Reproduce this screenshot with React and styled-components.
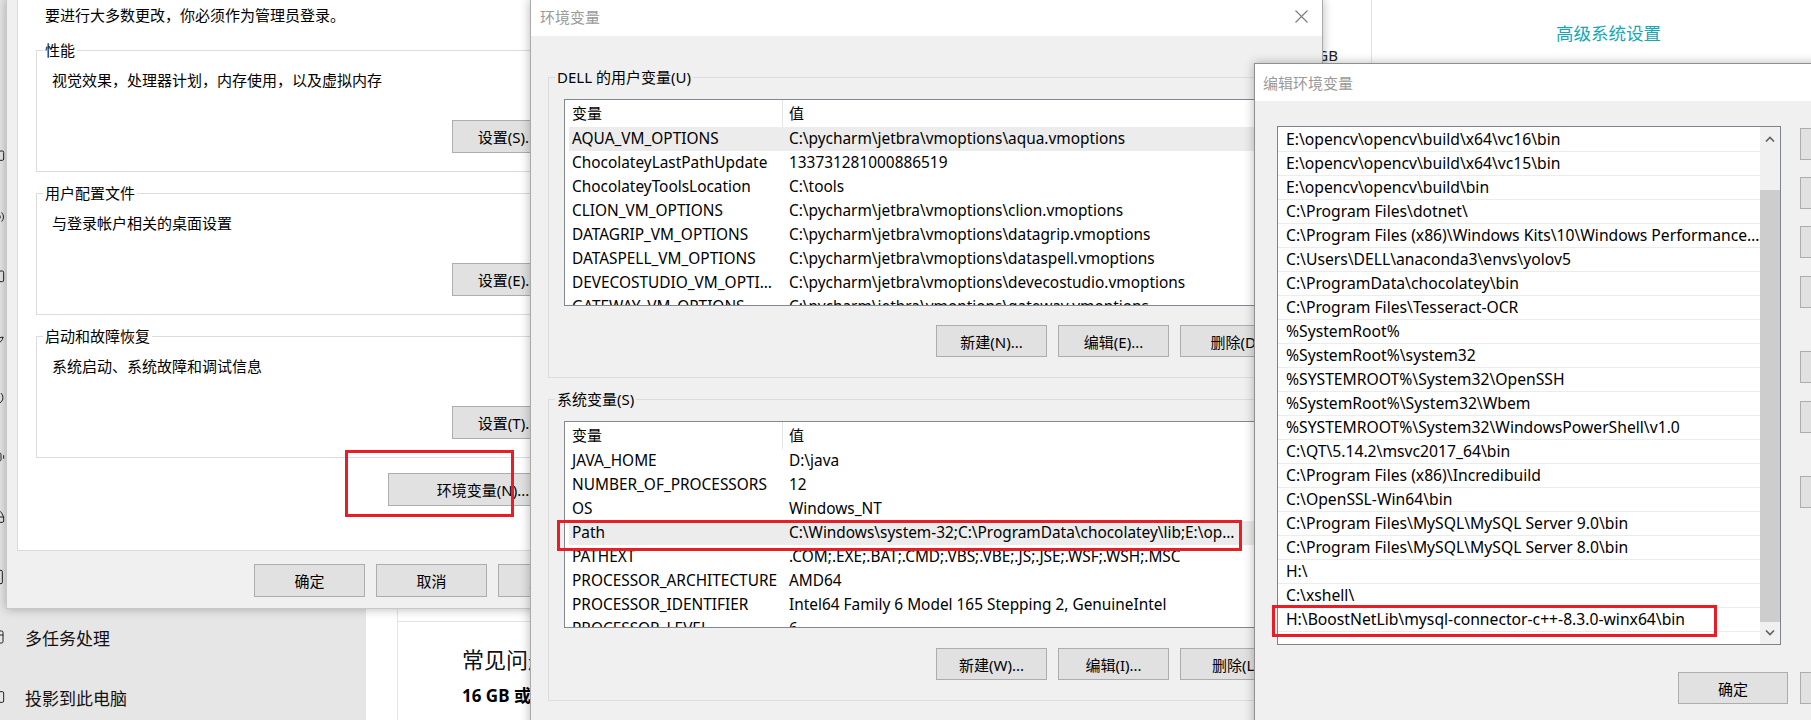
import styled, { createGlobalStyle } from 'styled-components';
import {
  Monitor,
  Volume2,
  MessageSquare,
  Moon,
  Power,
  BatteryMedium,
  HardDrive,
  Tablet,
  PanelsTopLeft,
  Cast,
} from 'lucide-react';

const GlobalStyle = createGlobalStyle`
  body {
    margin: 0;
    font-family: 'Noto Sans', 'Noto Sans CJK SC', sans-serif;
    font-size: 15px;
    color: #000;
  }
`;

const Desktop = styled.div`
  position: relative;
  width: 1811px;
  height: 720px;
  overflow: hidden;
  background: #fff;
`;

/* settings window behind the dialogs */
const SettingsWindow = styled.div`
  position: absolute;
  inset: 0;
  display: grid;
  grid-template-columns: 366px 31px 975px 1fr;
`;

const Nav = styled.nav`
  background: #e6e6e6;
  padding-top: 127px;
  overflow: hidden;
`;

const NavItem = styled.div`
  display: flex;
  align-items: center;
  gap: 20px;
  height: 60px;
  font-size: 17px;
  color: #111;

  svg {
    margin-left: -11px;
    flex: none;
  }
`;

const Gutter = styled.div`
  background: #fff;
`;

const MainColumn = styled.div`
  display: flex;
  flex-direction: column;
  border-left: 1px solid #e4e4e4;
  border-right: 1px solid #e4e4e4;
  padding-top: 43px;
`;

const SpecRow = styled.div`
  display: flex;
  justify-content: flex-end;
  padding-right: 33px;
  line-height: 24px;
  font-size: 15px;
  color: #222;
`;

const Divider = styled.div`
  margin-top: auto;
  border-top: 1px solid #e4e4e4;
`;

const FaqTitle = styled.div`
  margin-top: 22px;
  padding-left: 64px;
  font-size: 22px;
  line-height: 30px;
  color: #111;
`;

const FaqItem = styled.div`
  margin: 10px 0 12px;
  padding-left: 64px;
  font-size: 17px;
  font-weight: 700;
  line-height: 24px;
`;

const SideColumn = styled.div`
  padding: 21px 0 0 184px;
`;

const SideLink = styled.div`
  font-size: 17.5px;
  line-height: 24px;
  color: #16a6b6;
`;

/* generic dialog parts */
const Window = styled.div`
  position: absolute;
  left: ${(p) => p.$x}px;
  top: ${(p) => p.$y}px;
  width: ${(p) => p.$w}px;
  height: ${(p) => p.$h}px;
  background: #f0f0f0;
  border: 1px solid ${(p) => p.$border || '#aaaaaa'};
  box-shadow: 0 0 10px rgba(0, 0, 0, 0.28);
  box-sizing: border-box;
`;

const TitleBar = styled.div`
  display: flex;
  align-items: center;
  justify-content: space-between;
  height: ${(p) => p.$h}px;
  padding: 0 14px ${(p) => p.$pb || 0}px ${(p) => p.$pad}px;
  box-sizing: border-box;
  background: #fff;
  color: #9a9a9a;
  font-size: 15px;
`;

const WinButton = styled.button`
  display: flex;
  align-items: center;
  justify-content: center;
  flex: none;
  width: ${(p) => p.$w || 111}px;
  height: ${(p) => p.$h || 32}px;
  margin-top: ${(p) => p.$top || 0}px;
  padding: 0;
  background: #e1e1e1;
  border: 1px solid #adadad;
  font-family: inherit;
  font-size: 15px;
  color: #000;
  white-space: nowrap;
`;

const GroupBox = styled.fieldset`
  margin: ${(p) => p.$top || 0}px 0 0;
  padding: 0 ${(p) => p.$pr}px ${(p) => p.$pb}px 15px;
  border: 1px solid #dcdcdc;
  min-width: 0;
`;

const GroupTitle = styled.legend`
  margin-left: -9px;
  padding: 0 2px;
  font-size: 15px;
  line-height: 20px;
`;

const ButtonRow = styled.div`
  display: flex;
  justify-content: flex-end;
  gap: ${(p) => p.$gap || 11}px;
  margin-top: ${(p) => p.$top || 0}px;
  padding-right: ${(p) => p.$pr || 0}px;
`;

const Annotation = styled.div`
  position: absolute;
  left: ${(p) => p.$x}px;
  top: ${(p) => p.$y}px;
  width: ${(p) => p.$w}px;
  height: ${(p) => p.$h}px;
  border: 3px solid #e81d25;
  box-sizing: border-box;
  pointer-events: none;
`;

/* system properties dialog */
const PropsPanel = styled.div`
  display: flex;
  flex-direction: column;
  height: 551px;
  margin: 0 10px;
  padding: 5px 30px 0 18px;
  background: #fff;
  border: 1px solid #d9d9d9;
  border-top: none;
  box-sizing: border-box;
`;

const Note = styled.div`
  padding-left: 9px;
  margin-bottom: 15px;
  line-height: 20px;
`;

const GroupText = styled.div`
  margin-top: 10px;
  line-height: 20px;
`;

/* environment variables dialog */
const DialogBody = styled.div`
  padding: 0 17px;
`;

const ListBox = styled.div`
  height: 207px;
  margin-top: 12px;
  background: #fff;
  border: 1px solid #828790;
  box-sizing: border-box;
  overflow: hidden;
`;

const ListHeader = styled.div`
  display: flex;
  height: 27px;
  line-height: 27px;
`;

const HeaderCell = styled.div`
  width: ${(p) => p.$w}px;
  padding-left: ${(p) => p.$pl}px;
  box-sizing: border-box;
  border-right: ${(p) => (p.$sep ? '1px solid #e5e5e5' : 'none')};
`;

const ListRow = styled.div`
  display: flex;
  height: 24px;
  margin-left: 4px;
  line-height: 24px;
  font-size: 15.4px;
  background: ${(p) => (p.$selected ? '#ececec' : 'transparent')};
`;

const Cell = styled.div`
  width: ${(p) => p.$w}px;
  padding: 0 ${(p) => p.$pr}px 0 ${(p) => p.$pl}px;
  box-sizing: border-box;
  white-space: nowrap;
  overflow: hidden;
  text-overflow: ellipsis;
`;

/* edit dialog */
const EditBody = styled.div`
  display: flex;
  flex-direction: column;
  padding: 25px 0 0 22px;
`;

const EditMain = styled.div`
  display: flex;
  gap: 19px;
`;

const PathList = styled.div`
  display: flex;
  width: 504px;
  height: 519px;
  background: #fff;
  border: 1px solid #7f848c;
  box-sizing: border-box;
`;

const PathRows = styled.div`
  flex: 1;
  min-width: 0;
  padding-top: 1px;
  overflow: hidden;
`;

const PathRow = styled.div`
  height: 24px;
  padding-left: 8px;
  border-bottom: 1px solid #ececec;
  box-sizing: border-box;
  font-size: 15.7px;
  line-height: 23px;
  white-space: nowrap;
  overflow: hidden;
  text-overflow: ellipsis;
`;

const ScrollBar = styled.div`
  display: flex;
  flex-direction: column;
  width: 20px;
  background: #f0f0f0;
`;

const ScrollArrow = styled.div`
  display: flex;
  align-items: center;
  justify-content: center;
  height: ${(p) => p.$h}px;
`;

const ScrollThumb = styled.div`
  flex: 1;
  margin-top: 40px;
  background: #cdcdcd;
`;

const SideButtons = styled.div`
  display: flex;
  flex-direction: column;
`;

const navItems = [
  { icon: Monitor, text: '显示' },
  { icon: Volume2, text: '声音' },
  { icon: MessageSquare, text: '通知和操作' },
  { icon: Moon, text: '专注助手' },
  { icon: Power, text: '电源和睡眠' },
  { icon: BatteryMedium, text: '电池' },
  { icon: HardDrive, text: '存储' },
  { icon: Tablet, text: '平板电脑' },
  { icon: PanelsTopLeft, text: '多任务处理' },
  { icon: Cast, text: '投影到此电脑' },
];

const propGroups = [
  { title: '性能', text: '视觉效果，处理器计划，内存使用，以及虚拟内存', button: '设置(S)...' },
  { title: '用户配置文件', text: '与登录帐户相关的桌面设置', button: '设置(E)...' },
  { title: '启动和故障恢复', text: '系统启动、系统故障和调试信息', button: '设置(T)...' },
];

const userVars = [
  ['AQUA_VM_OPTIONS', 'C:\\pycharm\\jetbra\\vmoptions\\aqua.vmoptions', true],
  ['ChocolateyLastPathUpdate', '133731281000886519'],
  ['ChocolateyToolsLocation', 'C:\\tools'],
  ['CLION_VM_OPTIONS', 'C:\\pycharm\\jetbra\\vmoptions\\clion.vmoptions'],
  ['DATAGRIP_VM_OPTIONS', 'C:\\pycharm\\jetbra\\vmoptions\\datagrip.vmoptions'],
  ['DATASPELL_VM_OPTIONS', 'C:\\pycharm\\jetbra\\vmoptions\\dataspell.vmoptions'],
  ['DEVECOSTUDIO_VM_OPTIONS', 'C:\\pycharm\\jetbra\\vmoptions\\devecostudio.vmoptions'],
  ['GATEWAY_VM_OPTIONS', 'C:\\pycharm\\jetbra\\vmoptions\\gateway.vmoptions'],
];

const systemVars = [
  ['JAVA_HOME', 'D:\\java'],
  ['NUMBER_OF_PROCESSORS', '12'],
  ['OS', 'Windows_NT'],
  ['Path', 'C:\\Windows\\system-32;C:\\ProgramData\\chocolatey\\lib;E:\\opencv\\opencv\\build\\x64\\vc16\\bin', true],
  ['PATHEXT', '.COM;.EXE;.BAT;.CMD;.VBS;.VBE;.JS;.JSE;.WSF;.WSH;.MSC'],
  ['PROCESSOR_ARCHITECTURE', 'AMD64'],
  ['PROCESSOR_IDENTIFIER', 'Intel64 Family 6 Model 165 Stepping 2, GenuineIntel'],
  ['PROCESSOR_LEVEL', '6'],
];

const paths = [
  'E:\\opencv\\opencv\\build\\x64\\vc16\\bin',
  'E:\\opencv\\opencv\\build\\x64\\vc15\\bin',
  'E:\\opencv\\opencv\\build\\bin',
  'C:\\Program Files\\dotnet\\',
  'C:\\Program Files (x86)\\Windows Kits\\10\\Windows Performance Toolkit\\',
  'C:\\Users\\DELL\\anaconda3\\envs\\yolov5',
  'C:\\ProgramData\\chocolatey\\bin',
  'C:\\Program Files\\Tesseract-OCR',
  '%SystemRoot%',
  '%SystemRoot%\\system32',
  '%SYSTEMROOT%\\System32\\OpenSSH',
  '%SystemRoot%\\System32\\Wbem',
  '%SYSTEMROOT%\\System32\\WindowsPowerShell\\v1.0',
  'C:\\QT\\5.14.2\\msvc2017_64\\bin',
  'C:\\Program Files (x86)\\Incredibuild',
  'C:\\OpenSSL-Win64\\bin',
  'C:\\Program Files\\MySQL\\MySQL Server 9.0\\bin',
  'C:\\Program Files\\MySQL\\MySQL Server 8.0\\bin',
  'H:\\',
  'C:\\xshell\\',
  'H:\\BoostNetLib\\mysql-connector-c++-8.3.0-winx64\\bin',
];

const editButtons = [
  { text: '新建(N)', top: 2 },
  { text: '编辑(E)', top: 17 },
  { text: '浏览(B)...', top: 17 },
  { text: '删除(D)', top: 18 },
  { text: '上移(U)', top: 43 },
  { text: '下移(O)', top: 18 },
  { text: '编辑文本(T)...', top: 43 },
];

function CloseIcon() {
  return (
    <svg width="13" height="13" viewBox="0 0 13 13">
      <path d="M0.5 0.5 L12.5 12.5 M12.5 0.5 L0.5 12.5" stroke="#7a7a7a" strokeWidth="1.1" />
    </svg>
  );
}

function Chevron({ up }) {
  return (
    <svg width="10" height="6" viewBox="0 0 10 6">
      <path
        d={up ? 'M1 5.5 L5 1.5 L9 5.5' : 'M1 0.5 L5 4.5 L9 0.5'}
        fill="none"
        stroke="#606060"
        strokeWidth="1.6"
      />
    </svg>
  );
}

function VarList({ rows }) {
  return (
    <ListBox>
      <ListHeader>
        <HeaderCell $w={218} $pl={7} $sep>
          变量
        </HeaderCell>
        <HeaderCell $w={460} $pl={6}>
          值
        </HeaderCell>
      </ListHeader>
      {rows.map(([name, value, selected]) => (
        <ListRow key={name} $selected={selected}>
          <Cell $w={214} $pl={3} $pr={0}>
            {name}
          </Cell>
          <Cell $w={461} $pl={6} $pr={6}>
            {value}
          </Cell>
        </ListRow>
      ))}
    </ListBox>
  );
}

export default function App() {
  return (
    <>
      <GlobalStyle />
      <Desktop>
        <SettingsWindow>
          <Nav>
            {navItems.map(({ icon: Icon, text }) => (
              <NavItem key={text}>
                <Icon size={16} strokeWidth={1.5} color="#222" />
                {text}
              </NavItem>
            ))}
          </Nav>
          <Gutter />
          <MainColumn>
            <SpecRow>16.0 GB</SpecRow>
            <Divider />
            <FaqTitle>常见问题</FaqTitle>
            <FaqItem>16 GB 或更多内存</FaqItem>
          </MainColumn>
          <SideColumn>
            <SideLink>高级系统设置</SideLink>
          </SideColumn>
        </SettingsWindow>

        {/* 系统属性 */}
        <Window $x={6} $y={-1} $w={614} $h={610} $border="#c8c8c8">
          <PropsPanel>
            <Note>要进行大多数更改，你必须作为管理员登录。</Note>
            {propGroups.map((g, i) => (
              <GroupBox key={g.title} $top={i ? 11 : 0} $pr={14} $pb={18}>
                <GroupTitle>{g.title}</GroupTitle>
                <GroupText>{g.text}</GroupText>
                <ButtonRow $top={30}>
                  <WinButton $h={33}>{g.button}</WinButton>
                </ButtonRow>
              </GroupBox>
            ))}
            <ButtonRow $top={15}>
              <WinButton $w={190} $h={33}>
                环境变量(N)...
              </WinButton>
            </ButtonRow>
          </PropsPanel>
          <ButtonRow $top={13} $pr={10}>
            <WinButton $h={33}>确定</WinButton>
            <WinButton $h={33}>取消</WinButton>
            <WinButton $h={33}>应用(A)</WinButton>
          </ButtonRow>
          <Annotation $x={338} $y={450} $w={169} $h={67} />
        </Window>

        {/* 环境变量 */}
        <Window $x={530} $y={-1} $w={793} $h={760}>
          <TitleBar $h={36} $pb={4} $pad={9}>
            <span>环境变量</span>
            <CloseIcon />
          </TitleBar>
          <DialogBody>
            <GroupBox $top={31} $pr={13} $pb={20}>
              <GroupTitle>DELL 的用户变量(U)</GroupTitle>
              <VarList rows={userVars} />
              <ButtonRow $top={19}>
                <WinButton>新建(N)...</WinButton>
                <WinButton>编辑(E)...</WinButton>
                <WinButton>删除(D)</WinButton>
              </ButtonRow>
            </GroupBox>
            <GroupBox $top={11} $pr={13} $pb={20}>
              <GroupTitle>系统变量(S)</GroupTitle>
              <VarList rows={systemVars} />
              <ButtonRow $top={20}>
                <WinButton>新建(W)...</WinButton>
                <WinButton>编辑(I)...</WinButton>
                <WinButton>删除(L)</WinButton>
              </ButtonRow>
            </GroupBox>
          </DialogBody>
          <Annotation $x={26} $y={520} $w={685} $h={31} />
        </Window>

        {/* 编辑环境变量 */}
        <Window $x={1254} $y={63} $w={700} $h={700} $border="#8f8f8f">
          <TitleBar $h={37} $pad={8}>
            <span>编辑环境变量</span>
          </TitleBar>
          <EditBody>
            <EditMain>
              <PathList>
                <PathRows>
                  {paths.map((p) => (
                    <PathRow key={p}>{p}</PathRow>
                  ))}
                </PathRows>
                <ScrollBar>
                  <ScrollArrow $h={23}>
                    <Chevron up />
                  </ScrollArrow>
                  <ScrollThumb />
                  <ScrollArrow $h={22}>
                    <Chevron />
                  </ScrollArrow>
                </ScrollBar>
              </PathList>
              <SideButtons>
                {editButtons.map((b) => (
                  <WinButton key={b.text} $top={b.top}>
                    {b.text}
                  </WinButton>
                ))}
              </SideButtons>
            </EditMain>
            <ButtonRow $top={27} $gap={12} style={{ width: 634 }}>
              <WinButton $w={110}>确定</WinButton>
              <WinButton>取消</WinButton>
            </ButtonRow>
          </EditBody>
          <Annotation $x={17} $y={541} $w={445} $h={32} />
        </Window>
      </Desktop>
    </>
  );
}
